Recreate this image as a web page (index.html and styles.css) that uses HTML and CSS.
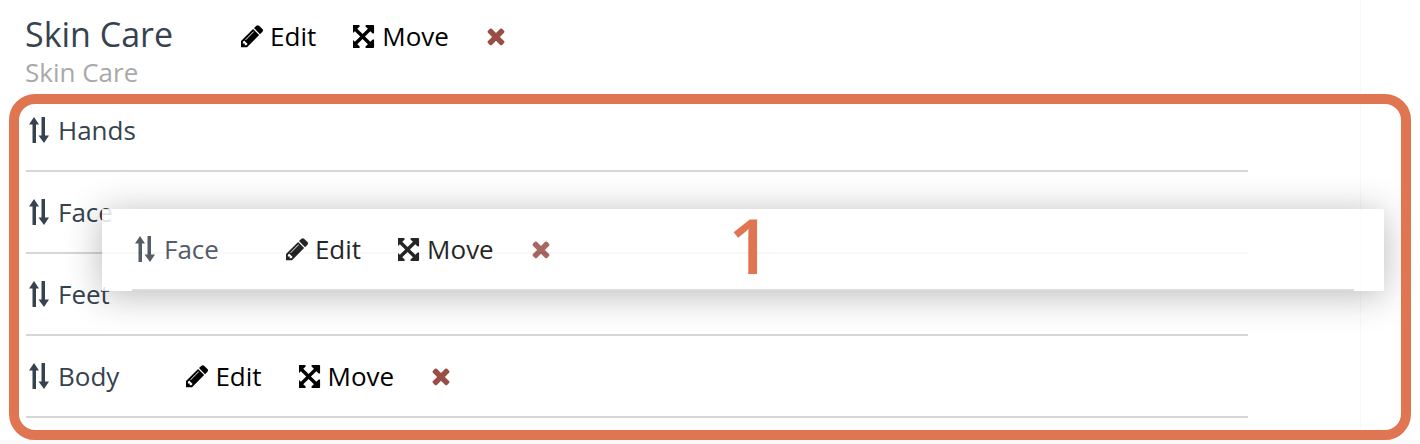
FILE: index.html
```html
<!DOCTYPE html>
<html lang="en">
<head>
    <meta charset="UTF-8">
    <meta name="viewport" content="width=device-width, initial-scale=1.0">
    <title>Skin Care</title>
    <link rel="stylesheet" href="styles.css">
</head>
<body>
    <svg class="defs" width="0" height="0">
        <symbol id="i-pencil" viewBox="0 0 1515 1792"><path d="M363 1536l91-91-235-235-91 91v107h128v128h107zm523-928q0-22-22-22-10 0-17 7l-542 542q-7 7-7 17 0 22 22 22 10 0 17-7l542-542q7-7 7-17zm-54-192l416 416-832 832h-416v-416zm683 96q0 53-37 90l-166 166-416-416 166-165q36-38 90-38 53 0 91 38l235 234q37 39 37 91z"/></symbol>
        <symbol id="i-move" viewBox="0 0 1536 1792"><path d="M1155 541l-355 355 355 355 144-144q29-31 70-14 39 17 39 59v448q0 26-19 45t-45 19h-448q-42 0-59-40-17-39 14-69l144-144-355-355-355 355 144 144q31 30 14 69-17 40-59 40h-448q-26 0-45-19t-19-45v-448q0-42 40-59 39-17 69 14l144 144 355-355-355-355-144 144q-19 19-45 19-12 0-24-5-40-17-40-59v-448q0-26 19-45t45-19h448q42 0 59 40 17 39-14 69l-144 144 355 355 355-355-144-144q-31-30-14-69 17-40 59-40h448q26 0 45 19t19 45v448q0 42-39 59-13 5-25 5-26 0-45-19z"/></symbol>
        <symbol id="i-times" viewBox="0 0 1408 1792"><path d="M1298 1322q0 40-28 68l-136 136q-28 28-68 28t-68-28l-294-294-294 294q-28 28-68 28t-68-28l-136-136q-28-28-28-68t28-68l294-294-294-294q-28-28-28-68t28-68l136-136q28-28 68-28t68 28l294 294 294-294q28-28 68-28t68 28l136 136q28 28 28 68t-28 68l-294 294 294 294q28 28 28 68z"/></symbol>
        <symbol id="i-sort" viewBox="0 0 20 26"><path d="M0 7.5L5 0l5 7.5H7v18.5H3.500V7.500zM12.500 0H16v18.500h4L15 26l-5.500-7.500h3z"/></symbol>
    </svg>

    <div class="content">
        <div class="head">
            <div class="head-text">
                <h1 class="title">Skin Care</h1>
                <div class="subtitle">Skin Care</div>
            </div>
            <div class="actions">
                <a class="action"><svg class="icon icon-pencil"><use href="#i-pencil"/></svg>Edit</a>
                <a class="action"><svg class="icon icon-move"><use href="#i-move"/></svg>Move</a>
                <a class="remove"><svg class="icon icon-times"><use href="#i-times"/></svg></a>
            </div>
        </div>

        <div class="row">
            <svg class="icon-sort"><use href="#i-sort"/></svg>
            <span class="name">Hands</span>
        </div>
        <div class="row">
            <svg class="icon-sort"><use href="#i-sort"/></svg>
            <span class="name">Face</span>
        </div>
        <div class="row">
            <svg class="icon-sort"><use href="#i-sort"/></svg>
            <span class="name">Feet</span>
        </div>
        <div class="row">
            <svg class="icon-sort"><use href="#i-sort"/></svg>
            <span class="name">Body</span>
            <div class="actions">
                <a class="action"><svg class="icon icon-pencil"><use href="#i-pencil"/></svg>Edit</a>
                <a class="action"><svg class="icon icon-move"><use href="#i-move"/></svg>Move</a>
                <a class="remove"><svg class="icon icon-times"><use href="#i-times"/></svg></a>
            </div>
        </div>
    </div>
    <div class="foot"></div>

    <!-- the row being dragged -->
    <div class="drag">
        <div class="row">
            <svg class="icon-sort"><use href="#i-sort"/></svg>
            <span class="name">Face</span>
            <div class="actions">
                <a class="action"><svg class="icon icon-pencil"><use href="#i-pencil"/></svg>Edit</a>
                <a class="action"><svg class="icon icon-move"><use href="#i-move"/></svg>Move</a>
                <a class="remove"><svg class="icon icon-times"><use href="#i-times"/></svg></a>
            </div>
        </div>
    </div>

    <!-- annotation on top of the screenshot -->
    <div class="ring"></div>
    <div class="step">1</div>
</body>
</html>
```

FILE: styles.css
```css
html, body {
    margin: 0;
    padding: 0;
}
body {
    position: relative;
    height: 444px;
    overflow: hidden;
    background: #fff;
    font-family: "Open Sans", "Liberation Sans", sans-serif;
    font-size: 26px;
    color: #36424f;
}
.defs {
    position: absolute;
}
.content {
    box-sizing: border-box;
    width: 1361px;
    height: 440px;
    padding-left: 26px;
    border-right: 1px solid #f8f8f8;
}
.foot {
    height: 4px;
    background: #fafafa;
}
.head {
    display: flex;
    height: 90px;
    padding-top: 14px;
    box-sizing: border-box;
}
.title {
    margin: 0;
    margin-left: -1px;
    font-size: 34px;
    font-weight: 400;
    line-height: 40px;
}
.subtitle {
    margin-left: -1px;
    font-size: 26px;
    line-height: 36px;
    color: #a9a9a9;
}
.head .actions {
    align-self: flex-start;
    height: 44px;
    margin-left: 68px;
}
.actions {
    display: flex;
    align-items: center;
    margin-left: 67px;
    color: #000;
}
.action {
    display: flex;
    align-items: center;
    margin-right: 37px;
}
.remove {
    display: flex;
    color: #994d45;
}
.icon {
    fill: currentColor;
}
.icon-pencil {
    width: 22px;
    height: 26px;
    margin-right: 7px;
}
.icon-move {
    width: 23px;
    height: 27px;
    margin-right: 6px;
}
.icon-times {
    width: 20px;
    height: 26px;
}
.row {
    box-sizing: border-box;
    display: flex;
    align-items: center;
    width: 1222px;
    height: 82px;
    padding-left: 3px;
    border-bottom: 2px solid #d6d6d6;
}
.icon-sort {
    width: 20px;
    height: 26px;
    margin-right: 9px;
    fill: currentColor;
}
.drag {
    position: absolute;
    left: 102px;
    top: 209px;
    width: 1222px;
    padding: 0 30px;
    background: #fff;
    opacity: .85;
    box-shadow: 0 4px 36px rgba(0, 0, 0, .32);
}
.ring {
    position: absolute;
    left: 9px;
    top: 94px;
    width: 1382px;
    height: 326px;
    border: 10px solid #df7651;
    border-radius: 26px;
}
.step {
    position: absolute;
    left: 728px;
    top: 193px;
    font-size: 76px;
    font-weight: 600;
    line-height: 104px;
    color: #df7651;
}
```
